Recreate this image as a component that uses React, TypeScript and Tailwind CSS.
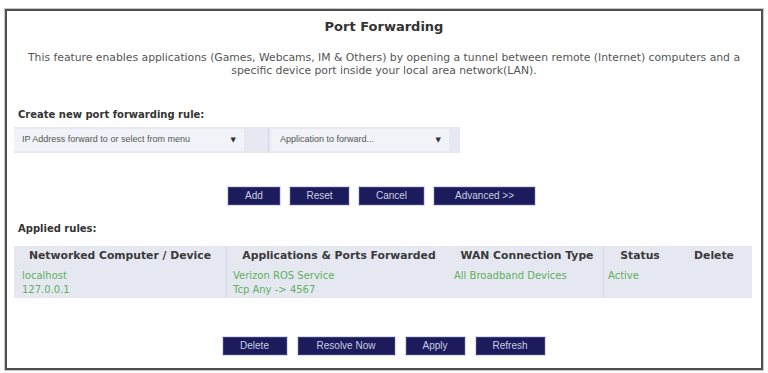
import React from "react";

const topButtons = ["Add", "Reset", "Cancel", "Advanced >>"];
const bottomButtons = ["Delete", "Resolve Now", "Apply", "Refresh"];

function NavyButton({ label, width }: { label: string; width: string }) {
  return (
    <button
      className={`h-[18px] ${width} bg-[#1c1c5c] border border-[#3a3a78] text-[10px] leading-none text-[#c9cde0] font-['Liberation_Sans',Arial,sans-serif] shadow-[0_0_0_1px_#d9dcea]`}
    >
      {label}
    </button>
  );
}

function FakeSelect({ text, className }: { text: string; className: string }) {
  return (
    <div className={`flex items-center h-[22px] px-2 bg-[#f1f3f8] ${className}`}>
      <span className="flex-1 text-[9px] text-[#555] font-['Liberation_Sans',Arial,sans-serif] truncate">{text}</span>
      <span className="text-[7px] text-[#333]">▼</span>
    </div>
  );
}

const rules = [
  {
    device: ["localhost", "127.0.0.1"],
    app: ["Verizon ROS Service", "Tcp Any -> 4567"],
    wan: "All Broadband Devices",
    status: "Active",
  },
];

export default function App() {
  return (
    <div className="w-[768px] h-[373px] bg-white pt-[9px] px-[5px] font-['DejaVu_Sans',Verdana,sans-serif]">
      <div className="h-[361px] border-2 border-[#4f4f4f] shadow-[0_0_0_1px_#c8c8c8] px-[7px] flex flex-col">
        <h1 className="mt-[8px] text-center text-[13px] leading-[16px] font-bold text-[#333]">Port Forwarding</h1>

        <p className="mt-[16px] text-center text-[10.8px] leading-[13px] text-[#555] whitespace-nowrap">
          This feature enables applications (Games, Webcams, IM &amp; Others) by opening a tunnel between remote (Internet) computers and a
          <br />
          specific device port inside your local area network(LAN).
        </p>

        <h2 className="mt-[32px] pl-[4px] text-[10px] leading-[12px] font-bold text-[#333]">Create new port forwarding rule:</h2>

        <div className="mt-[6px] w-[446px] h-[26px] shrink-0 bg-[#e6e9f2] flex items-center">
          <FakeSelect text="IP Address forward to or select from menu" className="w-[230px] ml-0" />
          <div className="ml-[24px] h-full w-px bg-[#d4d8e4]" />
          <FakeSelect text="Application to forward..." className="w-[178px] ml-[2px] pl-[9px]" />
        </div>

        <div className="mt-[34px] flex justify-center gap-[10px] pr-[5px]">
          <NavyButton label={topButtons[0]} width="w-[52px]" />
          <NavyButton label={topButtons[1]} width="w-[59px]" />
          <NavyButton label={topButtons[2]} width="w-[65px]" />
          <NavyButton label={topButtons[3]} width="w-[101px]" />
        </div>

        <h2 className="mt-[18px] pl-[4px] text-[10px] leading-[12px] font-bold text-[#333]">Applied rules:</h2>

        <div className="mt-[11px] w-[738px] bg-[#e5e8f0]">
          <div className="grid grid-cols-[213px_224px_153px_72px_76px] h-[20px] items-center font-bold text-[10.8px] text-[#3a3a3a] text-center whitespace-nowrap">
            <div className="h-full flex items-center justify-center border-r border-[#d3d7e2]">Networked Computer / Device</div>
            <div>Applications &amp; Ports Forwarded</div>
            <div className="h-full flex items-center justify-center border-r border-[#d3d7e2]">WAN Connection Type</div>
            <div>Status</div>
            <div>Delete</div>
          </div>
          {rules.map((r) => (
            <div
              key={r.device[1]}
              className="grid grid-cols-[213px_224px_153px_72px_76px] h-[32px] text-[#5fb05f] text-[10px] leading-[14px] whitespace-nowrap"
            >
              <div className="pl-[8px] pt-[3px] border-r border-[#d3d7e2]">
                <div>{r.device[0]}</div>
                <div>{r.device[1]}</div>
              </div>
              <div className="pl-[6px] pt-[3px]">
                <div>{r.app[0]}</div>
                <div>{r.app[1]}</div>
              </div>
              <div className="pl-[3px] pt-[3px] border-r border-[#d3d7e2]">{r.wan}</div>
              <div className="pl-[4px] pt-[3px]">{r.status}</div>
              <div />
            </div>
          ))}
        </div>

        <div className="mt-[39px] flex justify-center gap-[11px] pr-[1px]">
          <NavyButton label={bottomButtons[0]} width="w-[64px]" />
          <NavyButton label={bottomButtons[1]} width="w-[97px]" />
          <NavyButton label={bottomButtons[2]} width="w-[59px]" />
          <NavyButton label={bottomButtons[3]} width="w-[69px]" />
        </div>
      </div>
    </div>
  );
}
